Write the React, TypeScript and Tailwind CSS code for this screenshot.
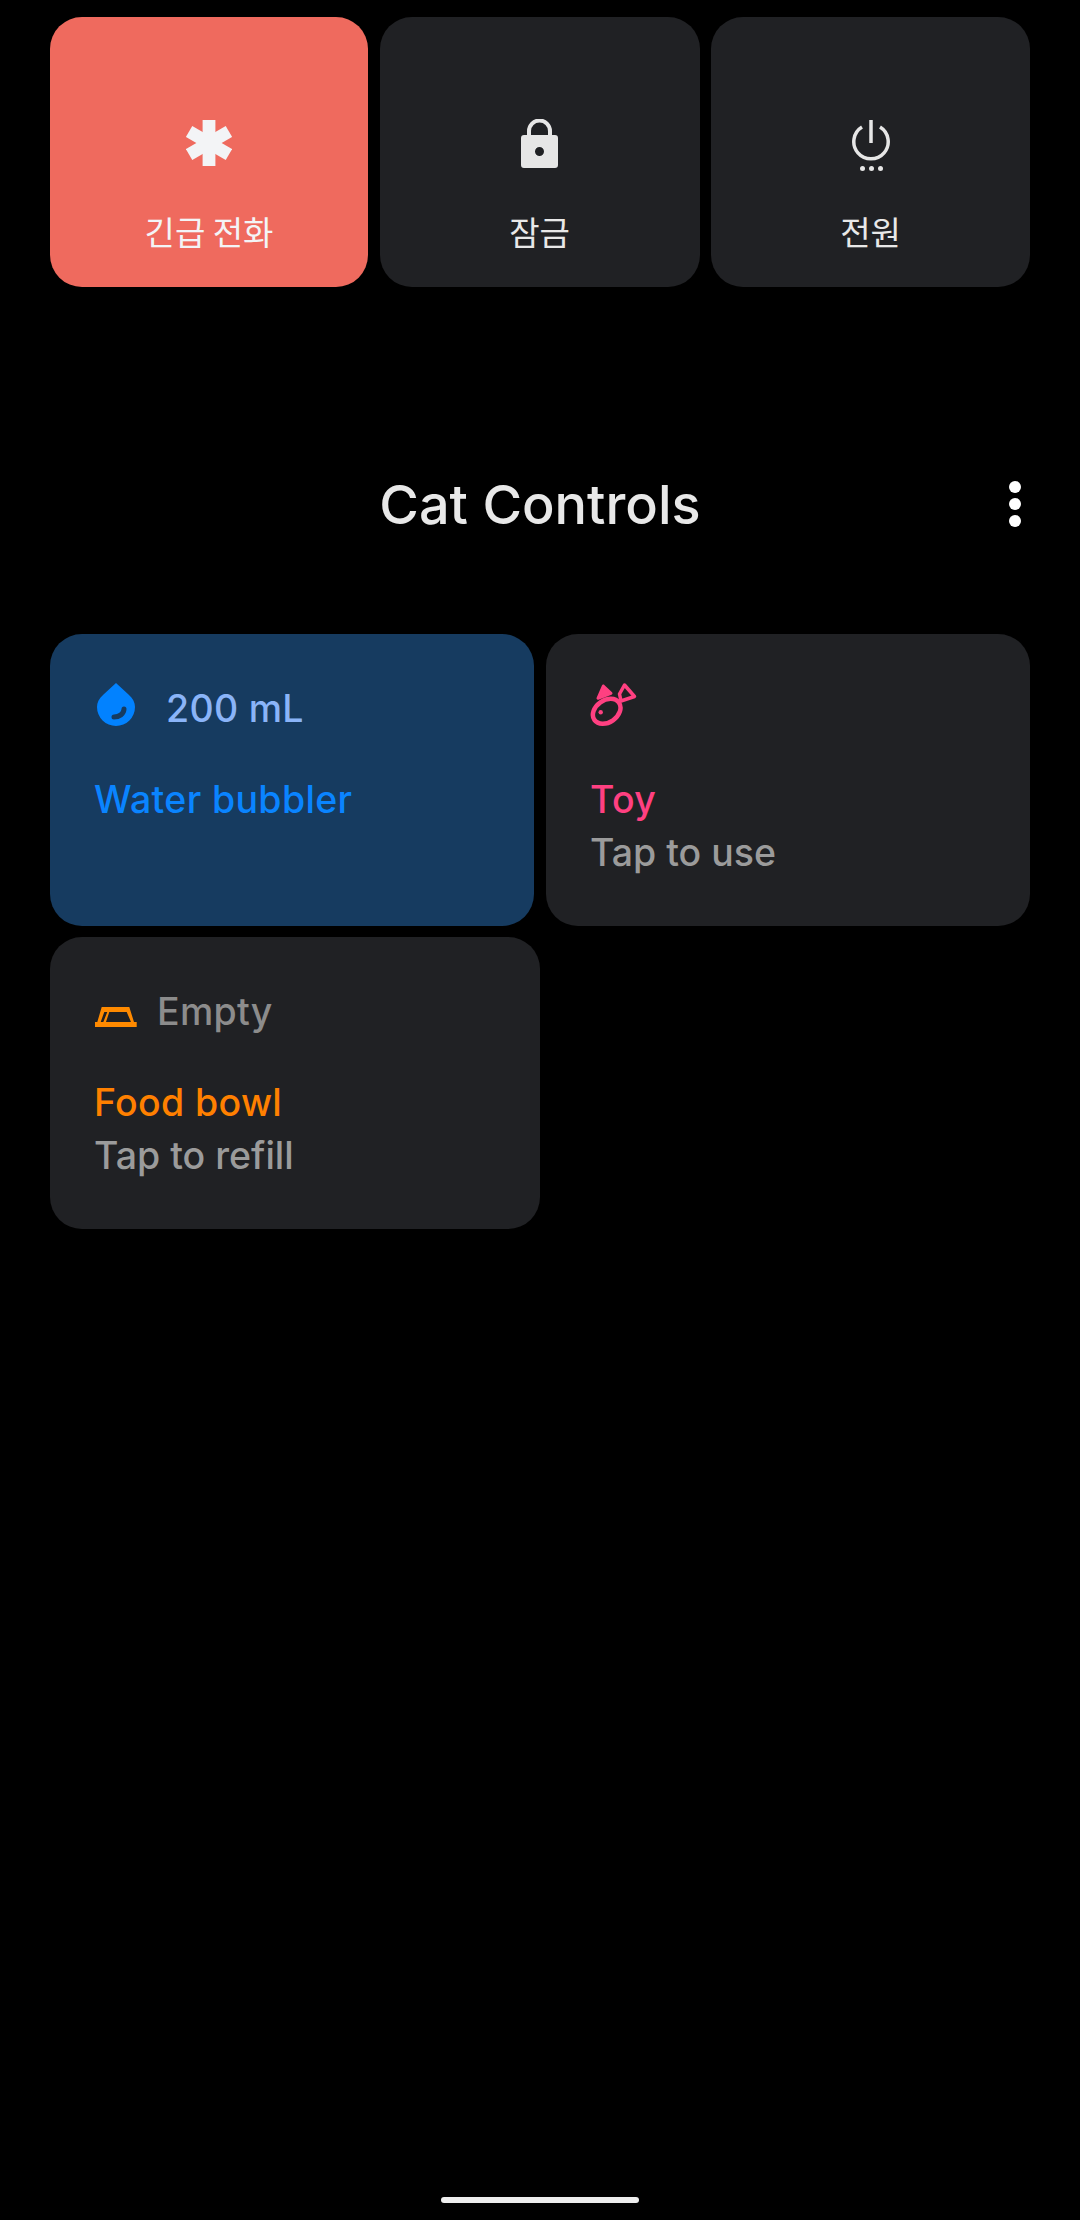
function Top({ label, bg, icon, text }: { label: string; bg: string; icon: React.ReactNode; text: string }) {
  return (
    <div className={`flex h-[270px] flex-col items-center rounded-[32px] ${bg}`}>
      <div className="flex h-[60px] w-[60px] mt-[96px] items-center justify-center">{icon}</div>
      <div className={`mt-[35px] text-[33px] leading-[46px] font-['Noto_Sans_CJK_KR',sans-serif] ${text}`}>{label}</div>
    </div>
  );
}

function Control({ w, bg, icon, gap, status, statusColor, title, titleColor, sub }: {
  w: string; bg: string; icon: React.ReactNode; gap: string; status?: string; statusColor?: string; title: string; titleColor: string; sub?: string;
}) {
  return (
    <div className={`h-[292px] rounded-[32px] pl-[44px] pt-[48px] ${w} ${bg} font-['Inter',sans-serif] font-medium text-[37.5px] leading-[52.5px]`}>
      <div className={`flex h-[54px] items-center ${gap}`}>
        {icon}
        {status && <span className={`tracking-[0.3px] ${statusColor}`}>{status}</span>}
      </div>
      <div className={`mt-[37.5px] tracking-[0.35px] ${titleColor}`}>{title}</div>
      {sub && <div className="mt-[1px] text-[#9b9b9b]">{sub}</div>}
    </div>
  );
}

export default function App() {
  return (
    <div className="flex h-[2220px] w-[1080px] flex-col bg-black px-[50px] pt-[17px]">
      <div className="grid grid-cols-[318px_320px_319px] gap-x-[11.5px]">
        <Top label="긴급 전화" bg="bg-[#ef6a5e]" text="text-[#f3f4f6]" icon={
          <svg width="46" height="46" viewBox="0 0 46 46" fill="#f3f4f6">
            <rect x="16.600" y="0" width="12.800" height="46" />
            <rect x="16.600" y="0" width="12.800" height="46" transform="rotate(60 23 23)" />
            <rect x="16.600" y="0" width="12.800" height="46" transform="rotate(120 23 23)" />
          </svg>
        } />
        <Top label="잠금" bg="bg-[#202124]" text="text-[#e8e8e8]" icon={
          <svg width="37" height="49" viewBox="0 0 37 49" fill="none">
            <path d="M8 19v-7a10.500 10.500 0 0 1 21 0v7" stroke="#e6e6e6" strokeWidth="4" />
            <path fillRule="evenodd" fill="#e6e6e6" d="M3 16h31a3 3 0 0 1 3 3v27a3 3 0 0 1-3 3H3a3 3 0 0 1-3-3V19a3 3 0 0 1 3-3zm15.500 12a4.500 4.500 0 1 0 0 9 4.500 4.500 0 0 0 0-9z" />
          </svg>
        } />
        <Top label="전원" bg="bg-[#202124]" text="text-[#e8e8e8]" icon={
          <svg className="mt-[5px]" width="38" height="51" viewBox="0 0 38 51" fill="none">
            <path d="M10 7A17.200 17.200 0 1 0 28 7" stroke="#e6e6e6" strokeWidth="3.500" />
            <path d="M19 0v23" stroke="#e6e6e6" strokeWidth="3.500" />
            <circle cx="10.500" cy="48.500" r="2.500" fill="#e6e6e6" />
            <circle cx="19.500" cy="48.500" r="2.500" fill="#e6e6e6" />
            <circle cx="28.500" cy="48.500" r="2.500" fill="#e6e6e6" />
          </svg>
        } />
      </div>

      <div className="mt-[168px] grid h-[100px] grid-cols-[1fr_auto_1fr] items-center">
        <div />
        <div className="font-['Inter',sans-serif] font-medium text-[54px] leading-[100px] text-[#e8e8e8]">Cat Controls</div>
        <div className="-mt-[2px] flex flex-col items-end gap-[5px] pr-[9px]">
          <span className="h-[12px] w-[12px] rounded-full bg-white" />
          <span className="h-[12px] w-[12px] rounded-full bg-white" />
          <span className="h-[12px] w-[12px] rounded-full bg-white" />
        </div>
      </div>

      <div className="mt-[79px] flex flex-wrap gap-x-[12px] gap-y-[11px]">
        <Control w="w-[484px]" bg="bg-[#163b60]" gap="gap-[31px]" status="200 mL" statusColor="text-[#8ab4f8]" title="Water bubbler" titleColor="text-[#0a84ff]" icon={
          <svg className="ml-[3px] -mt-[9px]" width="38" height="43" viewBox="0 0 38 43">
            <path fill="#0282ff" fillRule="evenodd" d="M19 0 L31.500 11.500 C36 15.500 38 19.500 38 24 A19 19 0 0 1 0 24 C0 19.500 2 15.500 6.500 11.500 Z" />
            <path d="M17 34c5 0 10-3 10-8" stroke="#163b60" strokeWidth="5" strokeLinecap="round" fill="none" />
          </svg>
        } />
        <Control w="w-[484px]" bg="bg-[#202124]" gap="gap-0" title="Toy" titleColor="text-[#ff4081]" sub="Tap to use" icon={
          <svg className="-mt-[10px]" width="48" height="46" viewBox="0 0 48 46" fill="none">
            <ellipse cx="16.700" cy="30.300" rx="15" ry="11" transform="rotate(-35 16.700 30.300)" stroke="#ff4081" strokeWidth="4.500" />
            <path d="M8 17.300 L13.300 5 L21 12.300 Z" fill="#ff4081" stroke="#ff4081" strokeWidth="3" strokeLinejoin="round" />
            <path d="M31 20 L29.500 13 L34.500 4 L44.500 15.500 Z" stroke="#ff4081" strokeWidth="3.500" strokeLinejoin="round" />
            <circle cx="10.700" cy="31.300" r="2.200" fill="#ff4081" />
          </svg>
        } />
        <Control w="w-[490px]" bg="bg-[#202124]" gap="gap-[20px]" status="Empty" statusColor="text-[#8c8c8c]" title="Food bowl" titleColor="text-[#ff8000]" sub="Tap to refill" icon={
          <svg className="ml-[1px] mt-[10px]" width="42" height="20" viewBox="0 0 42 20">
            <path fill="#ff8a00" fillRule="evenodd" d="M6.700 0H34.300L39 15H41.700V20H0V15H2.300ZM14.300 5H31.700L36 15H11ZM9.300 5H12.300L8.300 15H5.700Z" />
          </svg>
        } />
      </div>

      <div className="mt-auto mb-[17px] h-[6px] w-[198px] self-center rounded-full bg-[#eeeeee]" />
    </div>
  );
}
